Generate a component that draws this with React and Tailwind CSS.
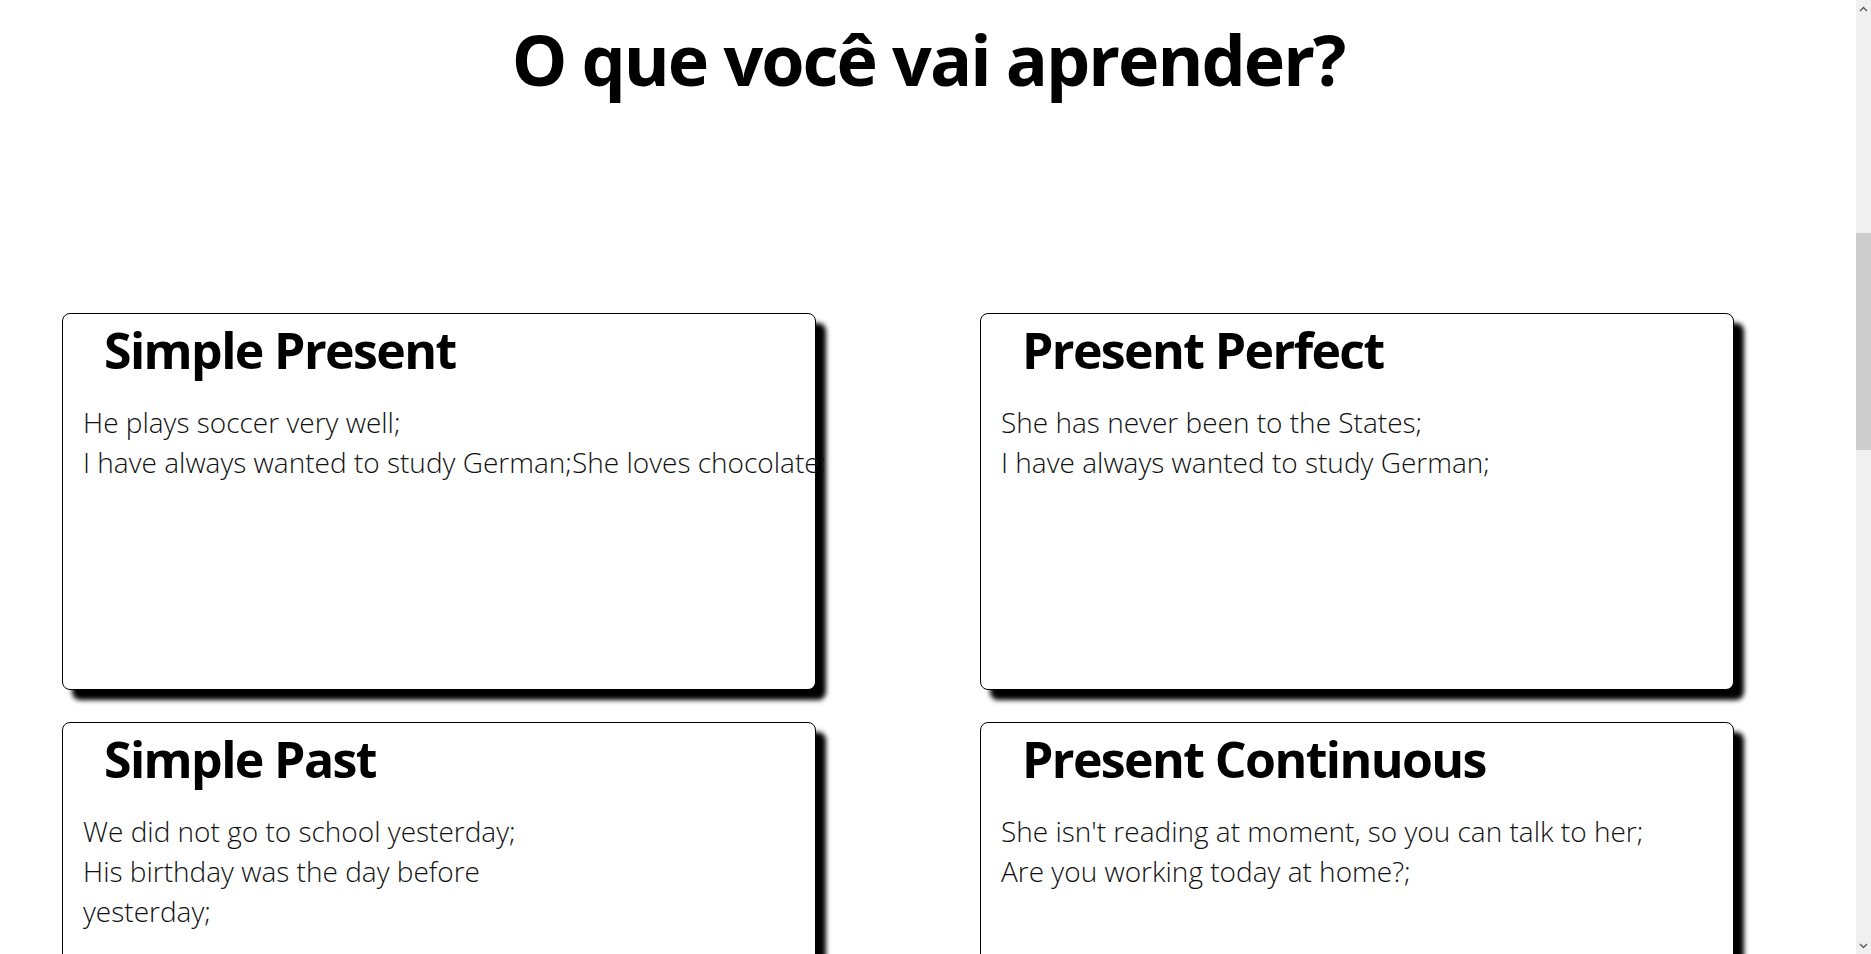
import React from 'react';

const cards = [
    { title: 'Simple Present', lines: ['He plays soccer very well;', 'I have always wanted to study German;She loves chocolate;'] },
    { title: 'Present Perfect', lines: ['She has never been to the States;', 'I have always wanted to study German;'] },
    { title: 'Simple Past', lines: ['We did not go to school yesterday;', 'His birthday was the day before', 'yesterday;'] },
    { title: 'Present Continuous', lines: ["She isn't reading at moment, so you can talk to her;", 'Are you working today at home?;'] },
];

function Card({ title, lines }) {
    return (
        <div className="h-[377px] bg-white border border-black rounded-[8px] shadow-[10px_10px_5px_#000]">
            <h2 className="pl-[41px] pt-[4px] text-[50px] leading-[64px] tracking-[-1.6px] font-bold text-black">{title}</h2>
            <div className="mt-[20px] pl-[20px] text-[28px] leading-[40px] font-light text-[#111]">
                {lines.map((l, i) => (
                    <p key={i} className="whitespace-nowrap">{l}</p>
                ))}
            </div>
        </div>
    );
}

export default function App() {
    return (
        <div className="h-[954px] w-full flex overflow-hidden bg-white" style={{ fontFamily: '"Open Sans", "Noto Sans", sans-serif' }}>
            <main className="flex-1 overflow-hidden">
                <h1 className="pt-[19px] text-center text-[70px] leading-[80px] tracking-[-2px] font-bold text-black">O que você vai aprender?</h1>

                {/* grade com os cards dos tempos verbais */}
                <div className="mt-[214px] pl-[62px] grid grid-cols-[754px_754px] gap-x-[164px] gap-y-[32px]">
                    {cards.map((c) => (
                        <Card key={c.title} {...c} />
                    ))}
                </div>
            </main>

            {/* barra de rolagem */}
            <aside className="w-[15px] h-full bg-[#f0f0f0] flex flex-col items-center">
                <div className="h-[17px] w-full flex items-center justify-center text-[#606060]">
                    <svg width="9" height="6" viewBox="0 0 9 6"><path d="M1 5 L4.5 1.5 L8 5" fill="none" stroke="currentColor" strokeWidth="1.5" /></svg>
                </div>
                <div className="mt-[216px] h-[217px] w-full bg-[#cdcdcd]"></div>
                <div className="flex-1"></div>
                <div className="h-[17px] w-full flex items-center justify-center text-[#606060]">
                    <svg width="9" height="6" viewBox="0 0 9 6"><path d="M1 1 L4.5 4.5 L8 1" fill="none" stroke="currentColor" strokeWidth="1.5" /></svg>
                </div>
            </aside>
        </div>
    );
}
